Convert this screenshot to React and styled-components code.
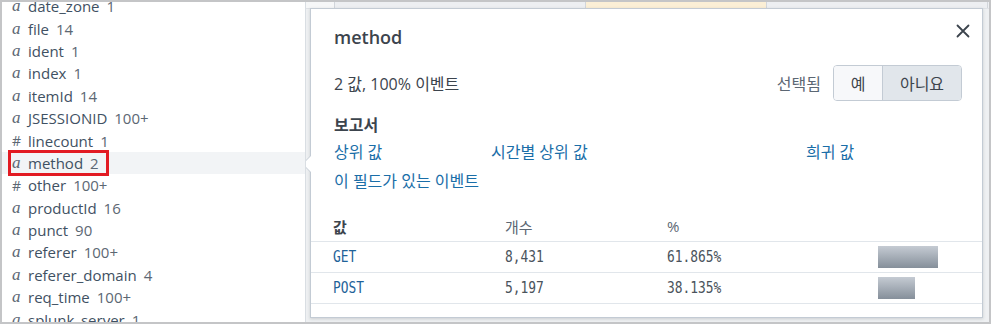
import React from "react";
import styled, { createGlobalStyle } from "styled-components";

const GlobalStyle = createGlobalStyle`
  html, body { margin: 0; padding: 0; background: #ffffff; }
  body { font-family: "Open Sans", "Noto Sans CJK KR", sans-serif; }
`;

const fields = [
  { type: "a", name: "date_zone", count: "1" },
  { type: "a", name: "file", count: "14" },
  { type: "a", name: "ident", count: "1" },
  { type: "a", name: "index", count: "1" },
  { type: "a", name: "itemId", count: "14" },
  { type: "a", name: "JSESSIONID", count: "100+" },
  { type: "#", name: "linecount", count: "1" },
  { type: "a", name: "method", count: "2", active: true },
  { type: "#", name: "other", count: "100+" },
  { type: "a", name: "productId", count: "16" },
  { type: "a", name: "punct", count: "90" },
  { type: "a", name: "referer", count: "100+" },
  { type: "a", name: "referer_domain", count: "4" },
  { type: "a", name: "req_time", count: "100+" },
  { type: "a", name: "splunk_server", count: "1" },
];

const rows = [
  { value: "GET", count: "8,431", pct: "61.865%", ratio: 61.865 },
  { value: "POST", count: "5,197", pct: "38.135%", ratio: 38.135 },
];

const Frame = styled.div`
  width: 991px;
  height: 324px;
  box-sizing: border-box;
  border: 2px solid #c4c5c7;
  background: #eef0f2;
  display: grid;
  grid-template-columns: 304px 1fr;
  overflow: hidden;
`;

const FieldList = styled.ul`
  list-style: none;
  margin: 0;
  padding: 0;
  background: #ffffff;
  border-right: 1px solid #d9dee3;
  overflow: hidden;
`;

const FieldRows = styled.div`
  margin-top: -7px;
`;

const FieldRow = styled.li`
  height: 22.4px;
  display: flex;
  align-items: center;
  padding-left: 10px;
  background: ${(p) => (p.$active ? "#f2f4f6" : "transparent")};
`;

const FieldLabel = styled.span`
  position: relative;
  display: inline-flex;
  align-items: center;
  gap: 5px;
  font-size: 15px;
  color: #3f5163;

  ${(p) =>
    p.$marked &&
    `
    &::after {
      content: "";
      position: absolute;
      left: -4px;
      right: -10px;
      top: -3px;
      bottom: -3px;
      border: 3px solid #e21b23;
    }
  `}
`;

const TypeMark = styled.span`
  font-style: ${(p) => (p.$hash ? "normal" : "italic")};
  font-family: ${(p) =>
    p.$hash ? '"Open Sans", sans-serif' : '"Liberation Serif", serif'};
  font-size: ${(p) => (p.$hash ? "14px" : "17px")};
  color: #5c6773;
  width: 11px;
`;

const Count = styled.span`
  margin-left: 2px;
  color: #5c6773;
`;

const Stage = styled.div`
  position: relative;
  overflow: hidden;
`;

const BackStrip = styled.div`
  height: 6px;
  display: flex;
  background: #edeff2;
  border-bottom: 1px solid #dfe2e6;
`;

const BackCell = styled.div`
  width: ${(p) => p.$w}px;
  background: ${(p) => p.$bg || "transparent"};
  border-right: 1px solid #d2d6db;
`;

const Popover = styled.div`
  position: absolute;
  left: 4px;
  top: 6px;
  width: 673px;
  height: 310px;
  box-sizing: border-box;
  background: #ffffff;
  border: 1px solid #c3cbd4;
  box-shadow: 0 1px 3px rgba(60, 68, 77, 0.2);
  padding: 0 20px 0 23px;
  color: #3c444d;

  &::before,
  &::after {
    content: "";
    position: absolute;
    top: 146px;
    border-style: solid;
    border-color: transparent;
  }
  &::before {
    left: -9px;
    border-width: 9px 9px 9px 0;
    border-right-color: #c3cbd4;
  }
  &::after {
    left: -8px;
    top: 147px;
    border-width: 8px 8px 8px 0;
    border-right-color: #ffffff;
  }
`;

const Header = styled.div`
  display: flex;
  justify-content: space-between;
  align-items: flex-start;
  padding-top: 8px;
`;

const Title = styled.h2`
  margin: 0;
  font-size: 18px;
  font-weight: 600;
  line-height: 40px;
  color: #3c444d;
`;

const CloseButton = styled.button`
  margin: 6px -9px 0 0;
  padding: 0;
  width: 16px;
  height: 16px;
  border: none;
  background: none;
  display: flex;
  align-items: center;
  justify-content: center;
`;

const Summary = styled.div`
  margin-top: 8px;
  display: flex;
  align-items: center;
  height: 36px;
  font-size: 16px;
`;

const SummaryText = styled.span`
  flex: 1;
  color: #3c444d;
`;

const SelectLabel = styled.span`
  color: #5c6773;
  margin-right: 12px;
`;

const Toggle = styled.div`
  display: flex;
  height: 36px;
  box-sizing: border-box;
  border: 1px solid #c3cbd4;
  border-radius: 4px;
  overflow: hidden;
`;

const ToggleButton = styled.button`
  width: ${(p) => p.$w}px;
  border: none;
  border-left: ${(p) => (p.$first ? "none" : "1px solid #c3cbd4")};
  background: ${(p) => (p.$on ? "#e1e6eb" : "#f7f8fa")};
  font-family: "Open Sans", "Noto Sans CJK KR", sans-serif;
  font-size: 16px;
  color: #3c444d;
  padding: 0;
`;

const SectionTitle = styled.h3`
  margin: 14px 0 0;
  font-size: 16px;
  font-weight: 700;
  line-height: 20px;
  color: #3c444d;
`;

const Links = styled.div`
  margin-top: 6px;
  display: grid;
  grid-template-columns: 157px 315px 1fr;
  grid-auto-rows: 20px;
  row-gap: 9px;
  align-items: center;
`;

const Link = styled.a`
  font-size: 16px;
  color: #1a6ea8;
  text-decoration: none;
  cursor: pointer;
`;

const Table = styled.div`
  margin: 21px -20px 0 -23px;
`;

const TableRow = styled.div`
  display: grid;
  grid-template-columns: 172px 162px 211px 1fr;
  height: 30px;
  align-items: center;
  border-bottom: 1px solid #e1e6eb;
  padding-left: 22px;
`;

const HeadCell = styled.span`
  font-size: 15px;
  font-weight: ${(p) => (p.$bold ? 700 : 400)};
  color: ${(p) => (p.$bold ? "#3c444d" : "#5c6773")};
`;

const DataCell = styled.span`
  display: inline-block;
  font-family: "DejaVu Sans Mono", "Liberation Mono", monospace;
  font-size: 15px;
  transform: scaleX(0.86);
  transform-origin: left center;
  white-space: nowrap;
  color: ${(p) => (p.$link ? "#1f6399" : "#4a535c")};
`;

const BarTrack = styled.div`
  display: flex;
  align-items: center;
`;

const Bar = styled.div`
  height: 22px;
  background: linear-gradient(#c5cbd3, #858f9a);
`;

function CloseIcon() {
  return (
    <svg width="14" height="14" viewBox="0 0 14 14">
      <path
        d="M1.5 1.5 L12.5 12.5 M12.5 1.5 L1.5 12.5"
        stroke="#3c444d"
        strokeWidth="1.8"
        strokeLinecap="round"
      />
    </svg>
  );
}

export default function App() {
  return (
    <>
      <GlobalStyle />
      <Frame>
        <FieldList>
          <FieldRows>
            {fields.map((f) => (
              <FieldRow key={f.name} $active={f.active}>
                <FieldLabel $marked={f.active}>
                  <TypeMark $hash={f.type === "#"}>{f.type}</TypeMark>
                  <span>{f.name}</span>
                  <Count>{f.count}</Count>
                </FieldLabel>
              </FieldRow>
            ))}
          </FieldRows>
        </FieldList>

        <Stage>
          <BackStrip>
            <BackCell $w={28} $bg="#f6f7f8" />
            <BackCell $w={250} />
            <BackCell $w={180} $bg="#fbefd6" />
            <BackCell $w={220} />
          </BackStrip>

          <Popover>
            <Header>
              <Title>method</Title>
              <CloseButton aria-label="닫기">
                <CloseIcon />
              </CloseButton>
            </Header>

            <Summary>
              <SummaryText>2 값, 100% 이벤트</SummaryText>
              <SelectLabel>선택됨</SelectLabel>
              <Toggle>
                <ToggleButton $w={48} $first>
                  예
                </ToggleButton>
                <ToggleButton $w={79} $on>
                  아니요
                </ToggleButton>
              </Toggle>
            </Summary>

            <SectionTitle>보고서</SectionTitle>
            <Links>
              <Link>상위 값</Link>
              <Link>시간별 상위 값</Link>
              <Link>희귀 값</Link>
              <Link>이 필드가 있는 이벤트</Link>
            </Links>

            <Table>
              <TableRow>
                <HeadCell $bold>값</HeadCell>
                <HeadCell>개수</HeadCell>
                <HeadCell>%</HeadCell>
                <span />
              </TableRow>
              {rows.map((r) => (
                <TableRow key={r.value}>
                  <DataCell $link>{r.value}</DataCell>
                  <DataCell>{r.count}</DataCell>
                  <DataCell>{r.pct}</DataCell>
                  <BarTrack>
                    <Bar style={{ width: `${(r.ratio / 61.865) * 60}px` }} />
                  </BarTrack>
                </TableRow>
              ))}
            </Table>
          </Popover>
        </Stage>
      </Frame>
    </>
  );
}
